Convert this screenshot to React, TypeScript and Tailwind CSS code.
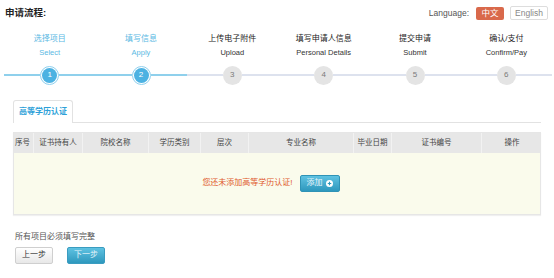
import { Fragment } from 'react';

const steps = [
  { cn: '选择项目', en: 'Select', done: true },
  { cn: '填写信息', en: 'Apply', done: true },
  { cn: '上传电子附件', en: 'Upload', done: false },
  { cn: '填写申请人信息', en: 'Personal Details', done: false },
  { cn: '提交申请', en: 'Submit', done: false },
  { cn: '确认/支付', en: 'Confirm/Pay', done: false },
];

const columns = [
  { label: '序号', w: 'w-[20px]' },
  { label: '证书持有人', w: 'w-[49px]' },
  { label: '院校名称', w: 'w-[66px]' },
  { label: '学历类别', w: 'w-[52px]' },
  { label: '层次', w: 'w-[48px]' },
  { label: '专业名称', w: 'w-[105px]' },
  { label: '毕业日期', w: 'w-[38px]' },
  { label: '证书编号', w: 'w-[90px]' },
  { label: '操作', w: 'w-[60px]' },
];

function StepDot({ n, done }: { n: number; done: boolean }) {
  if (done) {
    return (
      <div className="w-[19px] h-[19px] rounded-full border border-[#8fd0ee] bg-white p-[1px] shrink-0">
        <div className="w-full h-full rounded-full bg-[#4cb2e2] text-white text-[8px] flex items-center justify-center">
          {n}
        </div>
      </div>
    );
  }
  return (
    <div className="w-[19px] h-[19px] rounded-full bg-[#e4e4e4] text-[#7a7a7a] text-[8px] flex items-center justify-center shrink-0">
      {n}
    </div>
  );
}

export default function App() {
  return (
    <div className="w-[554px] h-[278px] bg-white overflow-hidden font-['Liberation_Sans','Noto_Sans_CJK_SC',sans-serif] text-[#333]">
      {/* Header */}
      <div className="flex items-center justify-between pl-[5px] pr-[6px] pt-[6px] h-[20px]">
        <div className="text-[9.5px] font-bold text-[#222] leading-none">申请流程:</div>
        <div className="flex items-center text-[8.5px]">
          <span className="text-[#555] mr-[7px]">Language:</span>
          <span className="h-[13px] w-[28px] bg-[#d9694b] text-white rounded-[2px] flex items-center justify-center">中文</span>
          <span className="h-[14px] w-[38px] ml-[6px] border border-[#ddd] text-[#888] rounded-[2px] flex items-center justify-center">English</span>
        </div>
      </div>

      {/* Steps */}
      <div className="ml-[4px] w-[548px] grid grid-cols-6 mt-[15px]">
        {steps.map((s, i) => (
          <div key={i} className="flex flex-col items-center">
            <div className={`text-[8px] leading-none ${s.done ? 'text-[#5bb9e3]' : 'text-[#222]'}`}>{s.cn}</div>
            <div className={`text-[7.5px] leading-none mt-[6px] ${s.done ? 'text-[#5bb9e3]' : 'text-[#333]'}`}>{s.en}</div>
            <div className="flex items-center w-full mt-[9px]">
              <div className={`flex-1 h-[2px] ${s.done ? 'bg-[#8fd0ec]' : 'bg-[#dde2ee]'}`} />
              <StepDot n={i + 1} done={s.done} />
              <div className={`flex-1 h-[2px] ${s.done ? 'bg-[#8fd0ec]' : 'bg-[#dde2ee]'}`} />
            </div>
          </div>
        ))}
      </div>

      {/* Tab */}
      <div className="ml-[13px] w-[528px] mt-[15px] border-b border-[#e2e2e2] flex">
        <div className="h-[23px] w-[60px] border border-b-0 border-[#e2e2e2] rounded-t-[3px] bg-white -mb-px flex items-center justify-center text-[8px] font-bold text-[#2c9fd8]">
          高等学历认证
        </div>
      </div>

      {/* Table */}
      <div className="ml-[13px] w-[528px] mt-[9px] border border-[#e6e6e6] shadow-[0_1px_1px_rgba(0,0,0,0.06)]">
        <div className="flex h-[20px] bg-[#e7e7e7]">
          {columns.map((c, i) => (
            <Fragment key={i}>
              <div
                className={`${c.w} shrink-0 flex items-center ${i === 0 ? 'justify-start pl-[1px]' : 'justify-center'} text-[7.5px] text-[#444] ${i < columns.length - 1 ? 'border-r border-[#f2f2f2]' : ''}`}
              >
                {c.label}
              </div>
            </Fragment>
          ))}
        </div>
        <div className="h-[61px] bg-[#fafbec] flex items-center justify-center">
          <span className="text-[8px] text-[#e0582b] mr-[7px] -ml-[12px]">您还未添加高等学历认证!</span>
          <button className="h-[17px] w-[40px] rounded-[2px] border border-[#2f93b6] bg-gradient-to-b from-[#5ec2e2] to-[#2d98bd] text-[#e8f6fb] text-[8px] flex items-center justify-center gap-[3px]">
            添加
            <svg width="7" height="7" viewBox="0 0 10 10">
              <circle cx="5" cy="5" r="5" fill="#fff" />
              <path d="M5 2.5v5M2.5 5h5" stroke="#2d98bd" strokeWidth="1.6" />
            </svg>
          </button>
        </div>
      </div>

      {/* Footer */}
      <div className="ml-[15px] mt-[18px] text-[8px] text-[#555] leading-none">所有项目必须填写完整</div>
      <div className="ml-[15px] mt-[6px] flex gap-[14px]">
        <button className="h-[17px] w-[38px] rounded-[2px] border border-[#cfcfcf] bg-gradient-to-b from-white to-[#e8e8e8] text-[8px] text-[#333] flex items-center justify-center">
          上一步
        </button>
        <button className="h-[17px] w-[38px] rounded-[2px] border border-[#3a9cc0] bg-gradient-to-b from-[#5ec2e2] to-[#2d98bd] text-[8px] text-[#e3f4fa] flex items-center justify-center">
          下一步
        </button>
      </div>
    </div>
  );
}
